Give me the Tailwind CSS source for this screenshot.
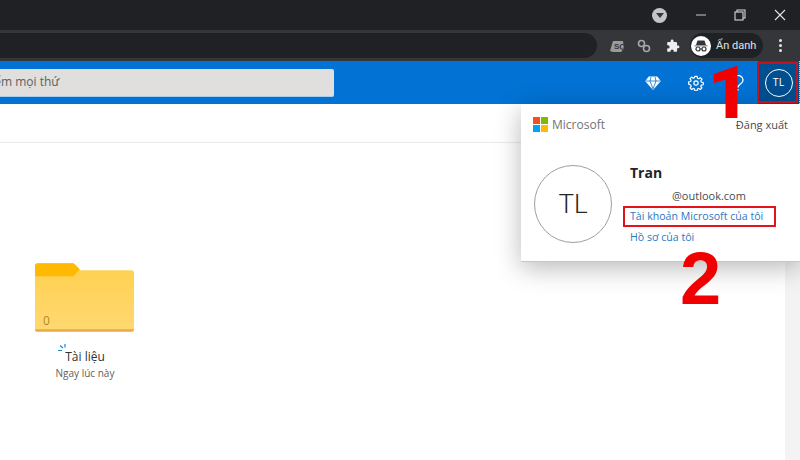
<!DOCTYPE html>
<html lang="vi">
<head>
  <meta charset="UTF-8" />
  <title>OneDrive</title>
  <script src="https://cdn.jsdelivr.net/npm/@tailwindcss/browser@4"></script>
</head>
<body class="w-[800px] h-[460px] overflow-hidden bg-white font-['Open_Sans',sans-serif]">
  <div class="relative w-[800px] h-[460px] overflow-hidden">
    <!-- window title bar -->
    <div class="h-[30px] bg-[#202124] flex items-center justify-end">
      <div class="w-[15px] h-[15px] rounded-full bg-[#c4c5c7] flex items-center justify-center mr-[28px]">
        <div class="w-0 h-0 border-l-[4px] border-r-[4px] border-t-[5px] border-l-transparent border-r-transparent border-t-[#35363a]"></div>
      </div>
      <svg class="w-[12px] h-[12px] mr-[27px]" viewBox="0 0 12 12" fill="none" stroke="#c8c9ca" stroke-width="1"><path d="M1 6h10"/></svg>
      <svg class="w-[12px] h-[12px] mr-[28px]" viewBox="0 0 12 12" fill="none" stroke="#d8d9da" stroke-width="1.1"><rect x="1" y="3" width="8" height="8"/><path d="M3 3V1h8v8H9"/></svg>
      <svg class="w-[12px] h-[12px] mr-[14px]" viewBox="0 0 12 12" fill="none" stroke="#e4e5e6" stroke-width="1.1"><path d="M1 1l10 10M11 1L1 11"/></svg>
    </div>

    <!-- browser toolbar -->
    <div class="h-[31px] bg-[#35363a] flex items-center">
      <div class="w-[597px] h-[25px] bg-[#202124] rounded-r-full shrink-0"></div>
      <svg class="w-[16px] h-[16px] ml-[12px]" viewBox="0 0 16 16"><path d="M1 13L4 3h10l1 8-3 3H4z" fill="#9a9b9d"/><text x="5" y="11" font-size="8" font-weight="700" font-family="Liberation Sans" fill="#35363a">SQ</text></svg>
      <svg class="w-[14px] h-[14px] ml-[12px]" viewBox="0 0 14 14" fill="none" stroke="#a6a7a9" stroke-width="1.6"><circle cx="4.5" cy="4.5" r="3"/><circle cx="9.5" cy="9.5" r="3"/></svg>
      <svg class="w-[14px] h-[14px] ml-[15px]" viewBox="0 0 24 24" fill="#eceded"><path d="M20.5 11H19V7a2 2 0 0 0-2-2h-4V3.500a2.500 2.500 0 0 0-5 0V5H4a2 2 0 0 0-2 2v3.800h1.500a2.700 2.700 0 0 1 0 5.400H2V20a2 2 0 0 0 2 2h3.800v-1.500a2.700 2.700 0 0 1 5.400 0V22H17a2 2 0 0 0 2-2v-4h1.500a2.500 2.500 0 0 0 0-5z"/></svg>
      <div class="ml-[10px] h-[25px] w-[73px] rounded-full bg-[#202124] flex items-center pl-[1px]">
        <div class="w-[20px] h-[20px] rounded-full bg-white flex items-center justify-center">
          <svg class="w-[16px] h-[16px]" viewBox="0 0 16 16" fill="#35363a"><path d="M3 7l1.500-4.500h7L13 7zM1.500 7.400h13v.9h-13z"/><circle cx="5" cy="11" r="2" fill="none" stroke="#35363a" stroke-width="1.200"/><circle cx="11" cy="11" r="2" fill="none" stroke="#35363a" stroke-width="1.200"/><path d="M7 11h2" stroke="#35363a"/></svg>
        </div>
        <span class="ml-[5px] text-[11px] leading-none text-[#e3e4e5] font-['Roboto',sans-serif] whitespace-nowrap">Ẩn danh</span>
      </div>
      <div class="ml-[16px] flex flex-col gap-[2px]">
        <div class="w-[3px] h-[3px] rounded-full bg-[#e4e5e6]"></div>
        <div class="w-[3px] h-[3px] rounded-full bg-[#e4e5e6]"></div>
        <div class="w-[3px] h-[3px] rounded-full bg-[#e4e5e6]"></div>
      </div>
    </div>

    <!-- app header -->
    <div class="h-[43px] bg-[#0272d4] flex items-center justify-between">
      <div class="w-[334px] h-[28px] bg-[#e1dfdd] rounded-r-[2px] border-b border-[#a9cdec] flex items-center overflow-hidden">
        <span class="text-[12px] text-[#605e5c] whitespace-nowrap -ml-[39px]">Tìm kiếm mọi thứ</span>
      </div>
      <div class="flex items-center h-full">
        <svg class="w-[16px] h-[14px]" viewBox="0 0 16 14" fill="none" stroke="#fff" stroke-width="1.200" stroke-linejoin="round"><path d="M4 1h8l3 4-7 8-7-8z" fill="#fff"/><path d="M1 5h14M5 5l3 8 3-8M6 1L5 5M10 1l1 4" stroke="#0272d4" stroke-width=".8"/></svg>
        <svg class="w-[16px] h-[16px] ml-[27px]" viewBox="0 0 24 24" fill="none" stroke="#fff" stroke-width="1.800" stroke-linejoin="round"><circle cx="12" cy="12" r="3.200"/><path d="M10.300 2h3.400l.5 2.900 1.900.8 2.400-1.700 2.400 2.400-1.700 2.400.8 1.900 2.900.5v3.400l-2.900.5-.8 1.900 1.700 2.400-2.400 2.400-2.400-1.700-1.900.8-.5 2.900h-3.400l-.5-2.900-1.900-.8-2.400 1.700-2.400-2.400 1.700-2.400-.8-1.900L1 13.700v-3.400l2.900-.5.8-1.900L3 5.500l2.400-2.400 2.400 1.700 1.900-.8z"/></svg>
        <svg class="ml-[27px] w-[14px] h-[16px]" viewBox="0 0 14 16" fill="none" stroke="#fff" stroke-width="1.300"><path d="M2 5a5 4.500 0 1 1 8 3.500C8 10 7 10.500 7 12.500M7 14v1.500"/></svg>
        <div class="ml-[13px] mr-[1px] w-[41px] h-[43px] bg-[#004f91] flex items-center justify-center">
          <div class="w-[28px] h-[28px] rounded-full border border-white text-white text-[10.500px] font-medium flex items-center justify-center">TL</div>
        </div>
      </div>
    </div>

    <!-- command bar -->
    <div class="h-[39px] border-b border-[#edebe9]"></div>

    <!-- folder tile -->
    <div class="w-[100px] ml-[35px] mt-[119px] flex flex-col items-center">
      <div class="relative w-[99px] h-[70px] self-start">
        <svg class="w-[99px] h-[70px]" viewBox="0 0 100 70">
          <defs>
            <linearGradient id="folderFill" x1="0" y1="0" x2="0" y2="1">
              <stop offset="0" stop-color="#ffd04f"/>
              <stop offset="1" stop-color="#ffd971"/>
            </linearGradient>
          </defs>
          <path d="M0 4a3 3 0 0 1 3-3h36l7 7h51a3 3 0 0 1 3 3v56a2 2 0 0 1-2 2H2a2 2 0 0 1-2-2z" fill="url(#folderFill)"/>
          <path d="M0 4a3 3 0 0 1 3-3h36l6 6-6 7H0z" fill="#ffb900"/>
          <path d="M0 67.500h100v.5a2 2 0 0 1-2 2H2a2 2 0 0 1-2-2z" fill="#e9a94a"/>
        </svg>
        <span class="absolute left-[8px] bottom-[4px] text-[12px] leading-[15px] text-[#b8862b]">0</span>
      </div>
      <div class="relative mt-[16px] text-[12px] leading-[17px] text-[#323130]">
        Tài liệu
        <svg class="absolute -left-[7px] top-[-4px] w-[10px] h-[10px]" viewBox="0 0 10 10" fill="none" stroke="#1a86d8" stroke-width="1.200"><path d="M7 0v3.500M2 1.500l3 2.500M0 6.500h4"/></svg>
      </div>
      <div class="text-[10px] leading-[15px] mt-[1px] text-[#605e5c] whitespace-nowrap">Ngay lúc này</div>
    </div>

    <!-- scrollbar gutter, seen below the popup -->
    <div class="absolute left-[785px] top-[104px] bottom-0 w-[15px] bg-[#f3f3f3]"></div>

    <!-- account popup -->
    <div class="absolute left-[521px] top-[104px] w-[279px] h-[158px] bg-white shadow-[0_6px_24px_rgba(0,0,0,0.28)] border-b border-[#c8c6c4]">
      <div class="flex items-start justify-between pl-[12px] pr-[12px] pt-[13px]">
        <div class="flex items-center gap-[4px]">
          <div class="grid grid-cols-2 gap-px w-[15px] h-[15px]">
            <div class="bg-[#f25022]"></div>
            <div class="bg-[#7fba00]"></div>
            <div class="bg-[#00a4ef]"></div>
            <div class="bg-[#ffb900]"></div>
          </div>
          <span class="text-[12px] leading-[15px] text-[#737373]">Microsoft</span>
        </div>
        <span class="text-[11px] leading-[15px] text-[#4a4a4a]">Đăng xuất</span>
      </div>
      <div class="flex pl-[13px] pt-[33px]">
        <div class="w-[78px] h-[78px] rounded-full border border-[#a19f9d] flex items-center justify-center text-[26px] text-[#252525] font-['Roboto',sans-serif] font-light shrink-0">TL</div>
        <div class="ml-[18px] -mt-[2px] flex flex-col">
          <span class="text-[14px] leading-[20px] font-bold text-[#252423]">Tran</span>
          <span class="ml-[42px] mt-[5px] text-[11px] leading-[15px] text-[#4a4a4a]">@outlook.com</span>
          <span class="mt-[6px] text-[10.600px] leading-[15px] text-[#2b78c5] whitespace-nowrap">Tài khoản Microsoft của tôi</span>
          <span class="mt-[6px] text-[10.600px] leading-[15px] text-[#2b78c5] whitespace-nowrap">Hồ sơ của tôi</span>
        </div>
      </div>
    </div>

    <!-- annotations on top of the screenshot -->
    <div class="absolute left-[757px] top-[62px] w-[41px] h-[41px] border-2 border-[#c0141f]"></div>
    <div class="absolute left-[623px] top-[206px] w-[153px] h-[21px] border-2 border-[#e4121c]"></div>
    <div class="absolute left-[799px] top-[61px] h-[43px] border-r border-dotted border-[#d9c9e2]"></div>
    <div class="absolute left-[708px] top-[54px] text-[72px] leading-[80px] font-black text-[#f00000] font-['Roboto',sans-serif]">1</div>
    <div class="absolute left-[680px] top-[239px] text-[74px] leading-[80px] font-bold text-[#f00000] font-['Liberation_Sans',sans-serif]">2</div>
  </div>
</body>
</html>
